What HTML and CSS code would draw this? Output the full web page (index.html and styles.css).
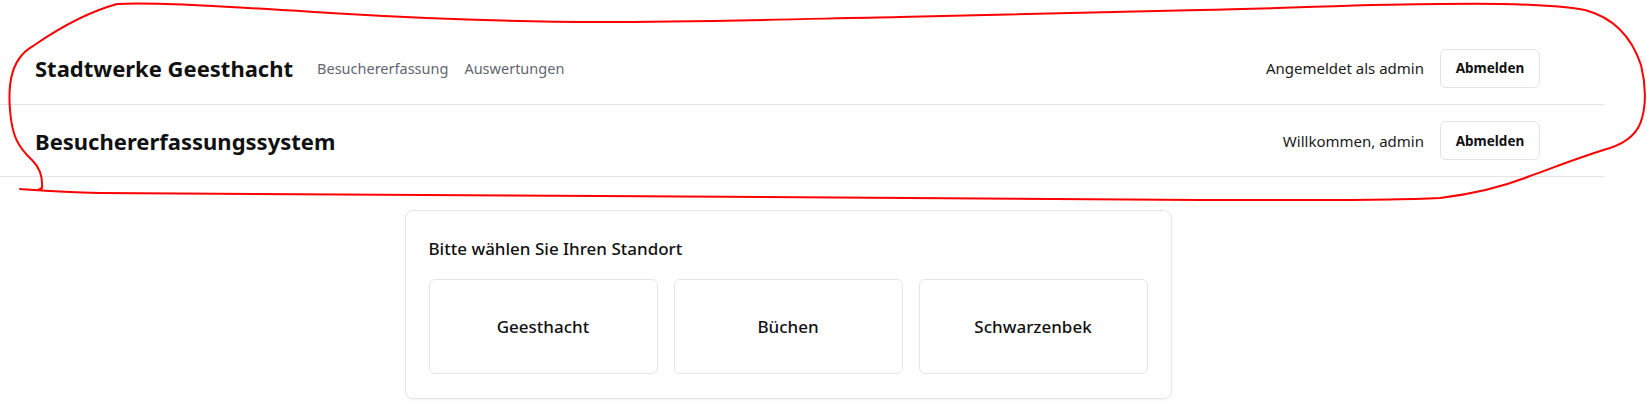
FILE: index.html
```html
<!DOCTYPE html>
<html lang="de">
<head>
<meta charset="utf-8">
<title>Besuchererfassungssystem</title>
<link rel="stylesheet" href="styles.css">
</head>
<body>
<div class="page">
  <header class="bar bar-top">
    <div class="bar-left">
      <span class="brand">Stadtwerke Geesthacht</span>
      <nav class="nav">
        <a class="nav-link" href="#">Besuchererfassung</a>
        <a class="nav-link" href="#">Auswertungen</a>
      </nav>
    </div>
    <div class="bar-right">
      <span class="user-text">Angemeldet als admin</span>
      <button class="btn">Abmelden</button>
    </div>
  </header>
  <div class="bar bar-sub">
    <div class="bar-left">
      <h1 class="brand">Besuchererfassungssystem</h1>
    </div>
    <div class="bar-right">
      <span class="user-text">Willkommen, admin</span>
      <button class="btn">Abmelden</button>
    </div>
  </div>
  <main class="main">
    <section class="card">
      <h2 class="card-title">Bitte wählen Sie Ihren Standort</h2>
      <div class="tiles">
        <button class="tile">Geesthacht</button>
        <button class="tile">Büchen</button>
        <button class="tile">Schwarzenbek</button>
      </div>
    </section>
  </main>
  <svg class="annotation" width="1647" height="415" viewBox="0 0 1647 415" aria-hidden="true">
    <path d="M38,190 L42,188 C43,176 40,168 32,160 C18,147 12,136 10,110 C8,86 12,66 22,55 C26,50 30,48 36,44 C58,29 88,12 117,4 C160,2 250,8 330,13 C430,19 520,22 600,22 C700,22 800,19 900,17 C1000,14 1100,12 1200,10 C1300,8 1370,4 1440,4 C1500,3 1550,4 1585,10 C1615,18 1632,38 1641,65 C1646,85 1646,105 1642,118 C1638,135 1625,143 1610,148 C1580,157 1555,167 1530,176 C1505,186 1480,193 1440,198 C1380,201 1300,200 1200,200 C1000,200 800,198 600,196 C400,195 200,194 100,193 C60,192 35,190 20,189" fill="none" stroke="#ff0000" stroke-width="2" stroke-linecap="round" stroke-linejoin="round"/>
  </svg>
</div>
</body>
</html>
```
FILE: styles.css
```css
* { box-sizing: border-box; }

html, body {
  margin: 0;
  padding: 0;
  background: #ffffff;
}

body {
  font-family: "Noto Sans", "Open Sans", sans-serif;
  color: #111111;
  width: 1647px;
  height: 415px;
  overflow: hidden;
}

.page {
  position: relative;
  padding-top: 32px;
}

.bar {
  width: 1605px;
  display: flex;
  align-items: center;
  justify-content: space-between;
  padding: 0 65px 0 35px;
  border-bottom: 1px solid #e5e5e5;
}

.bar-top { height: 73px; }
.bar-sub { height: 72px; }

.bar-left {
  display: flex;
  align-items: center;
  gap: 24px;
}

.brand {
  margin: 0;
  font-size: 22px;
  font-weight: 700;
  color: #111111;
}

.nav {
  display: flex;
  gap: 16px;
}

.nav-link {
  font-size: 14.5px;
  color: #5f6670;
  text-decoration: none;
}

.bar-right {
  display: flex;
  align-items: center;
  gap: 16px;
}

.user-text {
  font-size: 15px;
  color: #1a1a1a;
}

.btn {
  height: 39px;
  width: 100px;
  background: #ffffff;
  border: 1px solid #e3e3e3;
  border-radius: 6px;
  font-family: inherit;
  font-size: 13.5px;
  font-weight: 700;
  color: #111111;
  cursor: pointer;
}

.main {
  width: 1576px;
  display: flex;
  justify-content: center;
  padding-top: 33px;
}

.card {
  width: 767px;
  border: 1px solid #e5e5e5;
  border-radius: 8px;
  box-shadow: 0 1px 2px rgba(0, 0, 0, 0.05);
  padding: 24px 23px 24px;
}

.card-title {
  margin: 0 0 16px;
  font-size: 17px;
  font-weight: 500;
  line-height: 28px;
}

.tiles {
  display: grid;
  grid-template-columns: repeat(3, 1fr);
  gap: 16px;
}

.tile {
  height: 95px;
  background: #ffffff;
  border: 1px solid #e5e5e5;
  border-radius: 6px;
  font-family: inherit;
  font-size: 17px;
  font-weight: 500;
  color: #111111;
  cursor: pointer;
}

.annotation {
  position: absolute;
  left: 0;
  top: 0;
  pointer-events: none;
}
```
